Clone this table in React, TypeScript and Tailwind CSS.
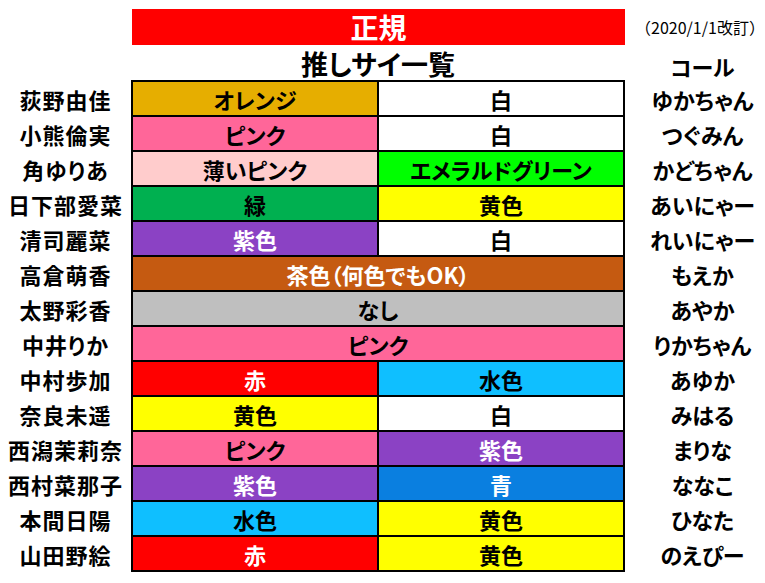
const GOLD = 'bg-[#e6ae00]';

type Cell = { text: string; bg: string; light?: boolean };
type Member = { name: string; cells: Cell[]; call: string };

const white: Cell = { text: '白', bg: 'bg-white' };
const pink: Cell = { text: 'ピンク', bg: 'bg-[#ff6699]' };
const yellow: Cell = { text: '黄色', bg: 'bg-[#ffff00]' };
const purple: Cell = { text: '紫色', bg: 'bg-[#8b42c4]', light: true };
const red: Cell = { text: '赤', bg: 'bg-[#ff0000]', light: true };
const aqua: Cell = { text: '水色', bg: 'bg-[#0fbfff]' };

const members: Member[] = [
  { name: '荻野由佳', cells: [{ text: 'オレンジ', bg: GOLD }, white], call: 'ゆかちゃん' },
  { name: '小熊倫実', cells: [pink, white], call: 'つぐみん' },
  {
    name: '角ゆりあ',
    cells: [
      { text: '薄いピンク', bg: 'bg-[#ffcccc]' },
      { text: 'エメラルドグリーン', bg: 'bg-[#00ff00]' },
    ],
    call: 'かどちゃん',
  },
  { name: '日下部愛菜', cells: [{ text: '緑', bg: 'bg-[#00b050]' }, yellow], call: 'あいにゃー' },
  { name: '清司麗菜', cells: [purple, white], call: 'れいにゃー' },
  { name: '高倉萌香', cells: [{ text: '茶色（何色でもOK）', bg: 'bg-[#c55a11]', light: true }], call: 'もえか' },
  { name: '太野彩香', cells: [{ text: 'なし', bg: 'bg-[#bfbfbf]' }], call: 'あやか' },
  { name: '中井りか', cells: [pink], call: 'りかちゃん' },
  { name: '中村歩加', cells: [red, aqua], call: 'あゆか' },
  { name: '奈良未遥', cells: [yellow, white], call: 'みはる' },
  { name: '西潟茉莉奈', cells: [pink, purple], call: 'まりな' },
  { name: '西村菜那子', cells: [purple, { text: '青', bg: 'bg-[#0a7fe0]', light: true }], call: 'ななこ' },
  { name: '本間日陽', cells: [aqua, yellow], call: 'ひなた' },
  { name: '山田野絵', cells: [red, yellow], call: 'のえぴー' },
];

const font = "font-['Noto_Sans_CJK_JP',sans-serif] [font-feature-settings:'palt']";

export default function App() {
  return (
    <div className={`w-[765px] h-[583px] overflow-hidden bg-white text-black ${font}`}>
      {/* header */}
      <div className="flex pt-[9px]">
        <div className="w-[132px]" />
        <div className="w-[493px] h-[36px] bg-[#ff0000] flex items-center justify-center text-white text-[28px] font-bold leading-none">
          正規
        </div>
        <div className="flex-1 flex items-center justify-center pl-[10px] text-[16px] leading-none [font-feature-settings:normal] whitespace-nowrap">
          （2020/1/1改訂）
        </div>
      </div>

      <div className="flex h-[35px] items-center font-bold">
        <div className="w-[131px]" />
        <div className="w-[494px] text-center text-[27px] leading-none pt-[2px]">推しサイ一覧</div>
        <div className="flex-1 text-center pl-[15px] text-[22px] leading-none pt-[6px]">コール</div>
      </div>

      {/* table */}
      <div className="flex font-bold text-[22px] leading-none">
        <div className="w-[131px] flex flex-col gap-[2px] pt-[2px]">
          {members.map((m) => (
            <div key={m.name} className="h-[33px] flex items-center justify-center tracking-[1px]">
              {m.name}
            </div>
          ))}
        </div>

        <div className="w-[494px] bg-black p-[2px] grid grid-cols-2 gap-[2px] auto-rows-[33px]">
          {members.map((m) =>
            m.cells.map((c, i) => (
              <div
                key={m.name + i}
                className={`${c.bg} ${m.cells.length === 1 ? 'col-span-2' : ''} ${
                  c.light ? 'text-white' : 'text-black'
                } flex items-center justify-center`}
              >
                {c.text}
              </div>
            ))
          )}
        </div>

        <div className="flex-1 flex flex-col gap-[2px] pt-[2px]">
          {members.map((m) => (
            <div key={m.call} className="h-[33px] flex items-center justify-center pl-[15px]">
              {m.call}
            </div>
          ))}
        </div>
      </div>
    </div>
  );
}
